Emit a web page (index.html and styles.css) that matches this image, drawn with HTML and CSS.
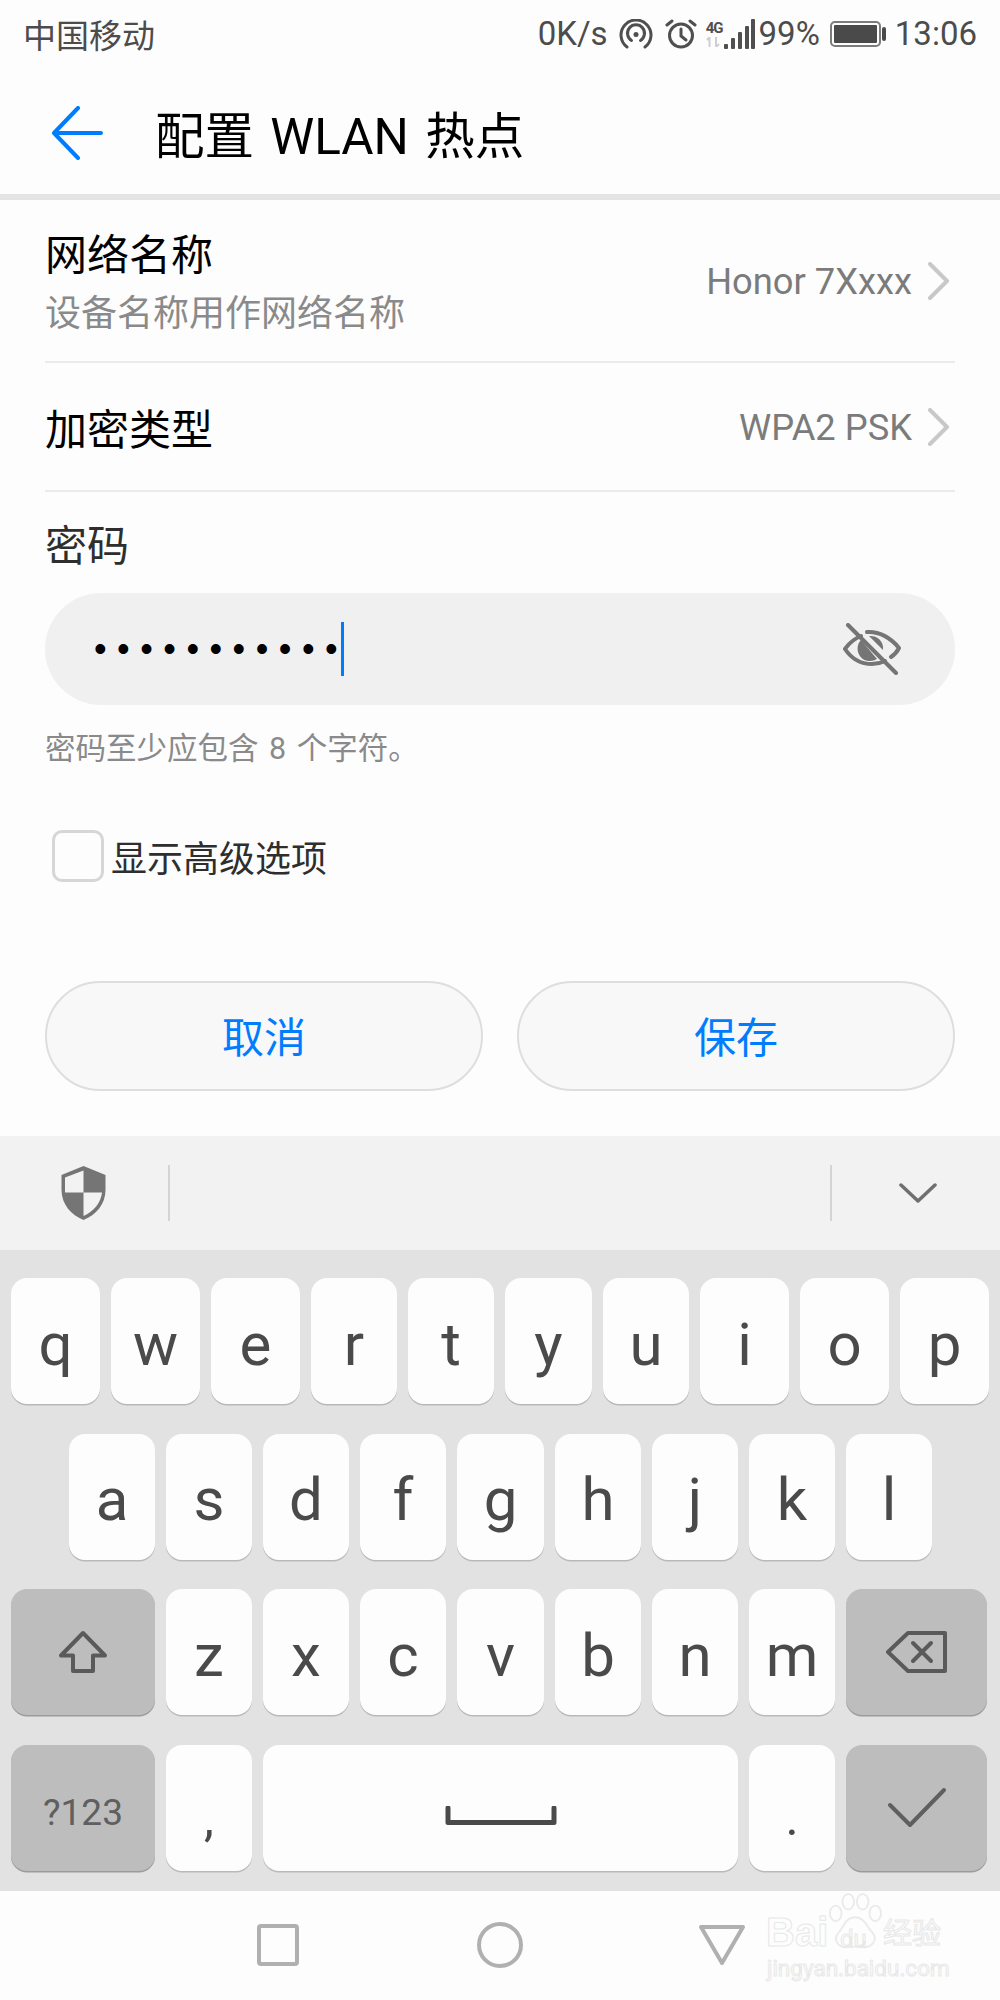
FILE: index.html
```html
<!DOCTYPE html>
<html lang="zh-CN">
<head>
<meta charset="utf-8">
<title>配置 WLAN 热点</title>
<link rel="stylesheet" href="styles.css">
</head>
<body>
<div class="screen">
  <div class="status">
    <span class="carrier">中国移动</span>
    <div class="status-right">
      <span class="speed">0K/s</span>
      <svg class="ic-hotspot" width="34" height="30" viewBox="0 0 34 30"><g fill="none" stroke="#4f4f4f" stroke-width="3" stroke-linecap="round"><path d="M8 28A15 15 0 1 1 26 28"/><path d="M12.5 21.5A8.5 8.5 0 1 1 21.5 21.5"/></g><circle cx="17" cy="15.5" r="2.5" fill="#4f4f4f"/></svg>
      <svg class="ic-alarm" width="32" height="30" viewBox="0 0 32 30"><g fill="none" stroke="#4f4f4f" stroke-width="3" stroke-linecap="round"><circle cx="16" cy="16.5" r="11.5"/><path d="M16 10v7l5 4"/><path d="M2 6l5-4M30 6l-5-4"/></g></svg>
      <div class="net">
        <div class="net-type"><span class="net-label">4G</span><svg width="16" height="10" viewBox="0 0 16 10"><path d="M3.5 0v10M3.5 0L1 3M10 0v10M10 10l3-3" fill="none" stroke="#cfcfcf" stroke-width="2"/></svg></div>
        <svg width="32" height="30" viewBox="0 0 32 30"><g fill="#4f4f4f"><rect x="1" y="25" width="4" height="5" rx="1"/><rect x="8" y="19" width="4" height="11" rx="1"/><rect x="15" y="13" width="4" height="17" rx="1"/><rect x="22" y="7" width="4" height="23" rx="1"/><rect x="28" y="0" width="4" height="30" rx="1"/></g></svg>
      </div>
      <span class="percent">99%</span>
      <svg class="ic-battery" width="57" height="26" viewBox="0 0 57 26"><rect x="1" y="1" width="49" height="24" rx="4" fill="none" stroke="#7c7c7c" stroke-width="2"/><rect x="4" y="4" width="43" height="18" rx="1" fill="#4a4a4a"/><rect x="52" y="6" width="4" height="14" rx="2" fill="#4a4a4a"/></svg>
      <span class="clock">13:06</span>
    </div>
  </div>

  <header class="appbar">
    <svg class="back" width="52" height="54" viewBox="0 0 52 54"><path d="M27 2L3 27L27 52M3 27H50" fill="none" stroke="#007dff" stroke-width="4" stroke-linecap="round" stroke-linejoin="round"/></svg>
    <h1 class="title">配置 WLAN 热点</h1>
  </header>

  <section class="row row-name">
    <div class="row-text">
      <div class="label">网络名称</div>
      <div class="sub">设备名称用作网络名称</div>
    </div>
    <div class="row-value">
      <span>Honor 7Xxxx</span>
      <svg width="22" height="38" viewBox="0 0 22 38"><path d="M2 2L19 19L2 36" fill="none" stroke="#c8c8c8" stroke-width="4" stroke-linecap="round" stroke-linejoin="round"/></svg>
    </div>
  </section>
  <section class="row row-type">
    <div class="label">加密类型</div>
    <div class="row-value">
      <span>WPA2 PSK</span>
      <svg width="22" height="38" viewBox="0 0 22 38"><path d="M2 2L19 19L2 36" fill="none" stroke="#c8c8c8" stroke-width="4" stroke-linecap="round" stroke-linejoin="round"/></svg>
    </div>
  </section>

  <section class="password">
    <div class="label label-soft">密码</div>
    <div class="field">
      <span class="dots">•••••••••••</span>
      <span class="caret"></span>
      <svg class="eye" width="58" height="52" viewBox="0 0 58 52"><g fill="none" stroke="#757575" stroke-width="4" stroke-linecap="round" stroke-linejoin="round"><path d="M18 13C8 17 5 22 2 26C8 35 17 41 29 41C34 41 38 40 42 38"/><path d="M24 9C36 8 48 15 56 25C54 29 51 32 48 34"/><path d="M5 2L53 50"/></g><path d="M18 17a12.5 12.5 0 0 0 16 19z" fill="#757575"/><path d="M26 13a12.5 12.5 0 0 1 14 14z" fill="#757575"/></svg>
    </div>
    <div class="hint">密码至少应包含 8 个字符。</div>
  </section>

  <label class="advanced">
    <span class="checkbox"></span>
    <span class="advanced-text">显示高级选项</span>
  </label>

  <div class="actions">
    <button class="pill">取消</button>
    <button class="pill">保存</button>
  </div>

  <div class="kb-bar">
    <svg class="shield" width="47" height="56" viewBox="0 0 47 56"><path d="M23.5 1L45.5 10V25C45.5 39 36 50 23.5 55C11 50 1.5 39 1.5 25V10Z" fill="#757575"/><path d="M23.5 5.5V27.5H5V12.5Z" fill="#f2f2f2"/><path d="M23.5 27.5H42C41 38 33 47 23.5 51Z" fill="#f2f2f2"/></svg>
    <span class="bar-line line-left"></span>
    <span class="bar-line line-right"></span>
    <svg class="collapse" width="38" height="22" viewBox="0 0 38 22"><path d="M2 3L19 19L36 3" fill="none" stroke="#6f6f6f" stroke-width="3.5" stroke-linecap="round" stroke-linejoin="round"/></svg>
  </div>

  <div class="keyboard">
    <div class="kb-row">
      <div class="key w89">q</div><div class="key w89">w</div><div class="key w89">e</div><div class="key w86">r</div><div class="key w86">t</div><div class="key w87">y</div><div class="key w86">u</div><div class="key w89">i</div><div class="key w89">o</div><div class="key w89">p</div>
    </div>
    <div class="kb-row kb-row-indent">
      <div class="key w86">a</div><div class="key w86">s</div><div class="key w86">d</div><div class="key w86">f</div><div class="key w87">g</div><div class="key w86">h</div><div class="key w86">j</div><div class="key w86">k</div><div class="key w86">l</div>
    </div>
    <div class="kb-row">
      <div class="key fn w144"><svg width="50" height="44" viewBox="0 0 50 44"><path d="M25 3L3 25.5H15V41H35V25.5H47Z" fill="none" stroke="#5a5a5a" stroke-width="4" stroke-linejoin="round"/></svg></div>
      <div class="key w86">z</div><div class="key w86">x</div><div class="key w86">c</div><div class="key w87">v</div><div class="key w86">b</div><div class="key w86">n</div><div class="key w86">m</div>
      <div class="key fn w141"><svg width="62" height="44" viewBox="0 0 62 44"><g fill="none" stroke="#5a5a5a" stroke-width="4" stroke-linejoin="round" stroke-linecap="round"><path d="M2 22L22 3H59V41H22Z"/><path d="M27 13L45 31M45 13L27 31"/></g></svg></div>
    </div>
    <div class="kb-row">
      <div class="key fn w144 key-sym">?123</div>
      <div class="key w86 key-punct">,</div>
      <div class="key w475"><svg width="114" height="20" viewBox="0 0 114 20"><path d="M4 2V16.5H110V2" fill="none" stroke="#4a4a4a" stroke-width="5" stroke-linejoin="round" stroke-linecap="round"/></svg></div>
      <div class="key w86 key-punct">.</div>
      <div class="key fn w141"><svg width="60" height="42" viewBox="0 0 60 42"><path d="M3 18L23 38L57 3" fill="none" stroke="#5f5f5f" stroke-width="4" stroke-linecap="round" stroke-linejoin="round"/></svg></div>
    </div>
  </div>

  <nav class="navbar">
    <svg width="42" height="42" viewBox="0 0 42 42"><rect x="2" y="2" width="38" height="38" rx="2" fill="none" stroke="#b0b0b0" stroke-width="4"/></svg>
    <svg width="46" height="46" viewBox="0 0 46 46"><circle cx="23" cy="23" r="21" fill="none" stroke="#b0b0b0" stroke-width="4"/></svg>
    <svg class="nav-back" width="48" height="42" viewBox="0 0 48 42"><path d="M3 3H45L24 39Z" fill="none" stroke="#b0b0b0" stroke-width="4" stroke-linejoin="round"/></svg>
  </nav>

  <div class="watermark">
    <svg class="paw" width="54" height="60" viewBox="0 0 56 60"><g fill="none" stroke="#ebebeb" stroke-width="2"><ellipse cx="8" cy="21" rx="6" ry="8"/><ellipse cx="21" cy="9" rx="6" ry="8"/><ellipse cx="36" cy="9" rx="6" ry="8"/><ellipse cx="49" cy="21" rx="6" ry="8"/><path d="M28 25C38 25 41 36 46 41C52 48 46 57 36 56C30 55 26 55 20 56C10 57 5 48 11 41C16 36 18 25 28 25Z"/></g></svg>
    <div class="wm-top"><span class="wm-bai">Bai</span><span class="wm-du">du</span><span class="wm-cn">经验</span></div>
    <div class="wm-url">jingyan.baidu.com</div>
  </div>
</div>
</body>
</html>
```
FILE: styles.css
```css
* { box-sizing: border-box; }
html, body { margin: 0; padding: 0; }
body {
  width: 1000px;
  height: 2000px;
  overflow: hidden;
  background: #fdfdfd;
  font-family: Roboto, "Noto Sans CJK SC", sans-serif;
}
.screen { position: relative; width: 1000px; height: 2000px; display: flex; flex-direction: column; }

.status { height: 60px; padding: 7px 23px 0; display: flex; align-items: center; justify-content: space-between; color: #4c4c4c; }
.carrier { font-size: 33px; }
.status-right { display: flex; align-items: center; font-size: 33px; }
.speed { margin-right: 11px; }
.ic-hotspot { margin-right: 12px; }
.ic-alarm { margin-right: 9px; }
.net { display: flex; align-items: flex-end; height: 30px; margin-right: 4px; }
.net-type { display: flex; flex-direction: column; align-items: center; width: 17px; height: 30px; }
.net-label { font-size: 15px; font-weight: 700; line-height: 18px; height: 18px; letter-spacing: -1px; color: #4f4f4f; }
.percent { margin-right: 10px; }
.ic-battery { margin-right: 8px; }

.appbar { height: 140px; border-bottom: 6px solid #e4e4e4; display: flex; align-items: center; padding: 12px 0 0 51px; }
.back { flex: none; }
.title { margin: 8px 0 0 52px; font-size: 49.5px; font-weight: 400; color: #000; word-spacing: 4px; line-height: 60px; }

.row { margin: 0 45px; display: flex; align-items: center; justify-content: space-between; border-bottom: 2px solid #ebebeb; }
.row-name { height: 163px; }
.row-type { height: 129px; }
.row-text { padding-top: 9px; }
.row-type .label { padding-top: 8px; }
.label { font-size: 42px; line-height: 58px; color: #000; }
.label-soft { color: #2e2e2e; }
.sub { font-size: 36px; line-height: 58px; color: #8a8a8a; }
.row-value { display: flex; align-items: center; gap: 16px; font-size: 36.3px; color: #7b7b7b; margin: 2px 5px 0 0; }
.row-value svg { margin-top: -2px; }

.password { padding: 26px 45px 0; }
.field { position: relative; margin-top: 17px; height: 112px; border-radius: 56px; background: #f0f0f0; display: flex; align-items: center; padding-left: 49px; }
.dots { font-family: "Liberation Sans", sans-serif; font-size: 36px; letter-spacing: 10.5px; color: #000; line-height: 112px; }
.caret { width: 3px; height: 54px; background: #007dff; margin-left: -7px; }
.eye { margin-left: auto; margin-right: 54px; }
.hint { margin-top: 24px; font-size: 30.5px; word-spacing: 3px; line-height: 40px; color: #8a8a8a; }

.advanced { margin: 61px 0 0 52px; display: flex; align-items: center; gap: 7px; height: 52px; }
.checkbox { width: 52px; height: 52px; border: 3px solid #d6d6d6; border-radius: 10px; background: #fdfdfd; }
.advanced-text { font-size: 36px; color: #2e2e2e; }

.actions { margin: 99px 45px 0; display: flex; gap: 34px; }
.pill { flex: 1; height: 110px; border: 2px solid #dedede; border-radius: 55px; background: #f8f8f8; color: #007dff; font-family: inherit; font-size: 42px; padding: 0 0 3px; }

.kb-bar { margin-top: 45px; height: 114px; background: #f2f2f2; display: flex; align-items: center; padding-left: 60px; }
.bar-line { width: 2px; height: 56px; background: #d4d4d4; }
.line-left { margin-left: 61px; }
.line-right { margin-left: 660px; }
.collapse { margin-left: 67px; }

.keyboard { height: 641px; background: #e2e2e2; padding: 28px 11px 0; display: flex; flex-direction: column; gap: 29.5px; }
.kb-row { display: flex; gap: 11px; height: 126px; }
.kb-row-indent { padding-left: 58px; }
.key { flex: none; height: 126px; border-radius: 16px; background: #fdfdfd; box-shadow: 0 1.5px 0 #b9b9b9; display: flex; align-items: center; justify-content: center; font-size: 60px; color: #4a4a4a; padding-top: 6px; }
.fn { background: #bdbdbd; box-shadow: 0 1.5px 0 #9b9b9b; padding-top: 0; }
.w86 { width: 86px; }
.w87 { width: 87px; }
.w89 { width: 89px; }
.w141 { width: 141px; }
.w144 { width: 144px; }
.w475 { width: 475px; padding-top: 16px; }
.key-sym { font-size: 37px; color: #5f5f5f; padding-top: 9px; }
.key-punct { font-size: 50px; padding-top: 20px; }

.navbar { flex: 1; display: flex; align-items: center; padding: 0 0 2px 257px; gap: 178px; }
.nav-back { margin-left: -3px; }

.watermark { position: absolute; left: 766px; top: 1892px; width: 182px; height: 92px; color: transparent; -webkit-text-stroke: 1px #e8e8e8; }
.paw { position: absolute; left: 62px; top: 0; }
.wm-top { position: absolute; left: 0; top: 24px; width: 182px; height: 38px; }
.wm-bai { position: absolute; left: 0; top: -3px; font-family: "Liberation Sans", sans-serif; font-size: 40px; line-height: 38px; font-weight: 700; }
.wm-du { position: absolute; left: 74px; top: 10px; font-size: 24px; line-height: 26px; }
.wm-cn { position: absolute; left: 117px; top: -1px; font-size: 29px; line-height: 38px; }
.wm-url { position: absolute; left: 1px; top: 63px; font-size: 22.5px; line-height: 26px; white-space: nowrap; }
```
